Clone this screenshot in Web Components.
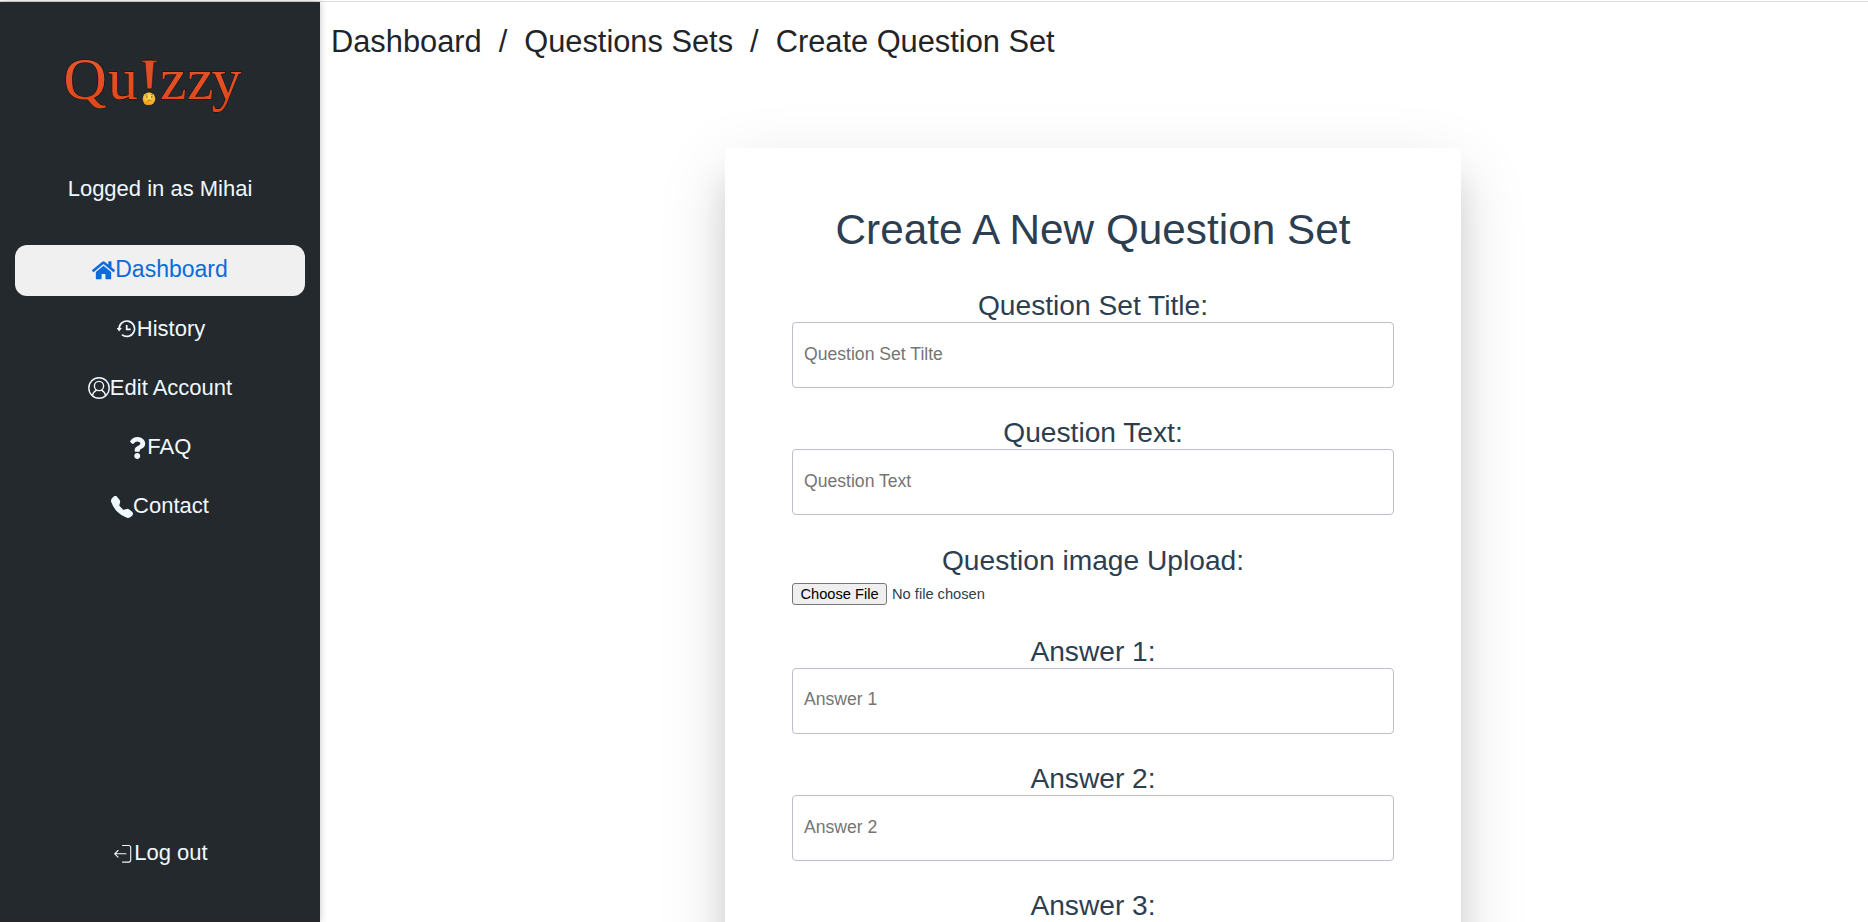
<!DOCTYPE html>
<html lang="en">
<head>
<meta charset="utf-8">
<title>Quizzy - Create Question Set</title>
<style>
html,body{margin:0;height:100%;overflow:hidden;background:#fff}
body{font-family:"Liberation Sans",Arial,sans-serif}
</style>
</head>
<body>
<quiz-app></quiz-app>
<script>
const define = (name, html, setup) => customElements.define(name, class extends HTMLElement {
  connectedCallback() {
    if (this.shadowRoot) return;
    const root = this.attachShadow({mode: 'open'});
    root.innerHTML = html;
    if (setup) setup(this, root);
  }
});

const icons = {
  home: ['0 0 576 512', 23, 20.5, '<path fill="currentColor" d="M280.37 148.26L96 300.11V464a16 16 0 0 0 16 16l112.06-.29a16 16 0 0 0 15.92-16V368a16 16 0 0 1 16-16h64a16 16 0 0 1 16 16v95.64a16 16 0 0 0 16 16.05L464 480a16 16 0 0 0 16-16V300L295.67 148.26a12.19 12.19 0 0 0-15.3 0zM571.6 251.47L488 182.56V44.05a12 12 0 0 0-12-12h-56a12 12 0 0 0-12 12v72.61L318.47 43a48 48 0 0 0-61 0L4.34 251.47a12 12 0 0 0-1.6 16.9l25.5 31A12 12 0 0 0 45.15 301l235.22-193.74a12.19 12.19 0 0 1 15.3 0L530.9 301a12 12 0 0 0 16.9-1.6l25.5-31a12 12 0 0 0-1.7-16.93z"/>'],
  history: ['0 0 22 22', 22, 22, '<g fill="none" stroke="currentColor" stroke-width="1.7"><path d="M4.2 11.6A7.7 7.7 0 1 1 6.9 16.6"/><path d="M11.7 7v4.4h4"/></g><path fill="currentColor" d="M1.6 9.9h5.2L4.2 13.6z"/>'],
  user: ['0 0 22 22', 22, 22, '<g fill="none" stroke="currentColor" stroke-width="1.4"><circle cx="11" cy="11" r="10.2"/><circle cx="11" cy="9" r="4.6"/><path d="M4.4 18.7c.6-3 2.2-4.6 4.2-5.6M17.6 18.7c-.6-3-2.2-4.6-4.2-5.6"/></g>'],
  question: ['0 0 435 512', 18.7, 22, '<path fill="currentColor" d="M202.021 0C122.202 0 70.503 32.703 29.914 91.026c-7.363 10.58-5.093 25.086 5.178 32.874l43.138 32.709c10.373 7.865 25.132 6.026 33.253-4.148 25.049-31.381 43.63-49.449 82.757-49.449 30.764 0 68.816 19.799 68.816 49.631 0 22.552-18.617 34.134-48.993 51.164-35.423 19.86-82.299 44.576-82.299 106.405V320c0 13.255 10.745 24 24 24h72.471c13.255 0 24-10.745 24-24v-5.773c0-42.86 125.268-44.645 125.268-160.627C377.504 66.256 286.902 0 202.021 0zM192 373.459c-38.196 0-69.271 31.075-69.271 69.271 0 38.195 31.075 69.27 69.271 69.27s69.271-31.075 69.271-69.271-31.075-69.27-69.271-69.27z"/>'],
  phone: ['0 0 16 16', 22, 22, '<path fill="currentColor" d="M1.885.511a1.745 1.745 0 0 1 2.61.163L6.29 2.98c.329.423.445.974.315 1.494l-.547 2.19a.68.68 0 0 0 .178.643l2.457 2.457a.68.68 0 0 0 .644.178l2.189-.547a1.75 1.75 0 0 1 1.494.315l2.306 1.794c.829.645.905 1.87.163 2.611l-1.034 1.034c-.74.74-1.846 1.065-2.877.702a18.6 18.6 0 0 1-7.01-4.42 18.6 18.6 0 0 1-4.42-7.009c-.362-1.03-.037-2.137.703-2.877z"/>'],
  logout: ['0 0 22 22', 22, 22, '<g fill="none" stroke="currentColor" stroke-width="1.1" stroke-linecap="round" stroke-linejoin="round"><path d="M10.5 2.5h6.2a2 2 0 0 1 2 2v12.6a2 2 0 0 1-2 2h-6.2"/><path d="M2.8 10.8h11.2M6 7.5l-3.3 3.3L6 14.1"/></g>']
};

define('quiz-icon', `<style>:host{display:block;flex:none;line-height:0}svg{display:block}</style>`, (el, root) => {
  const [box, w, h, body] = icons[el.getAttribute('name')];
  root.innerHTML += `<svg viewBox="${box}" width="${w}" height="${h}">${body}</svg>`;
});

define('quiz-logo', `<style>:host{display:block;width:210px;height:90px}svg{display:block;overflow:visible}
text{font-family:"Liberation Serif",serif;font-size:60px;fill:url(#o);stroke:#160d0b;stroke-width:1;paint-order:stroke}</style>
<svg width="210" height="90" viewBox="48 37 210 90">
<defs><linearGradient id="o" x1="0" y1="0" x2="0" y2="1"><stop offset="0" stop-color="#e95a30"/><stop offset="1" stop-color="#de4519"/></linearGradient>
<radialGradient id="e" cx=".5" cy=".3" r=".75"><stop offset="0" stop-color="#ffe65a"/><stop offset="1" stop-color="#f39a17"/></radialGradient></defs>
<text x="63.5 108 139.2 160 187 211.5" y="98.8">Qu!zzy</text>
<path d="M141.8 60.6h15.4v1.2l-3.4 1-2 26h-4.6l-2-26-3.4-1z" fill="#df4e25" stroke="#160d0b" stroke-width=".5"/>
<circle cx="149" cy="98.7" r="6.3" fill="url(#e)"/>
<path d="M145.3 95.4q1.3-1 2.5-.5M150.4 94.5q1.7-.5 2.7.6M147.5 100.6q2-.9 4 .2" fill="none" stroke="#8a5a22" stroke-width=".7"/>
<circle cx="147" cy="97" r=".7" fill="#59351a"/><circle cx="151.8" cy="97" r=".7" fill="#59351a"/>
<path d="M143.5 101.5q3 .6 5.5-.4l.4 1.3-2 2.3q-3.3.4-3.9-3.2z" fill="#eba318"/>
</svg>`);

define('nav-item', `<style>
:host{display:flex;align-items:center;justify-content:center;height:51px;box-sizing:border-box;border-radius:12px;font-size:22px;line-height:25px;color:#f0f8ff;white-space:nowrap}
:host([active]){background:#f0f0f0;color:#0a6cdc;font-size:23px}
span{position:relative;top:-1px}
</style><span><slot></slot></span>`, (el, root) => {
  const icon = document.createElement('quiz-icon');
  icon.setAttribute('name', el.getAttribute('icon'));
  root.querySelector('span').before(icon);
});

define('quiz-sidebar', `<style>
:host{display:flex;flex-direction:column;width:320px;box-sizing:border-box;padding:35px 15px 42px;background:#24292d;box-shadow:0 0 7px rgba(0,0,0,.25);border-bottom:1px solid #2a2028}
quiz-logo{margin-left:33px;flex:none}
p{margin:49px 0 0;text-align:center;font-size:22px;line-height:26px;color:#f0f8ff}
nav{display:flex;flex-direction:column;gap:8.2px;margin-top:42.6px}
.out{margin-top:auto}
</style>
<quiz-logo></quiz-logo><p>Logged in as Mihai</p>
<nav><nav-item icon="home" active>Dashboard</nav-item><nav-item icon="history">History</nav-item><nav-item icon="user">Edit Account</nav-item><nav-item icon="question">FAQ</nav-item><nav-item icon="phone">Contact</nav-item></nav>
<nav-item class="out" icon="logout">Log out</nav-item>`);

define('bread-crumb', `<style>:host{display:flex;gap:17px;font-size:30.8px;line-height:36px;color:#212529;white-space:nowrap}</style>
<span>Dashboard</span><span>/</span><span>Questions Sets</span><span>/</span><span>Create Question Set</span>`);

define('form-field', `<style>
:host{display:block;margin-bottom:29.4px}
label{display:block;height:32px;line-height:32px;font-size:28.16px;text-align:center}
input{display:block;width:100%;height:66px;box-sizing:border-box;border:1px solid #bdbdcb;border-radius:4px;padding:0 11px 1.4px;font:17.6px "Liberation Sans",Arial,sans-serif;background:#fff}
input::placeholder{color:#757575}
</style><label></label><input>`, (el, root) => {
  root.querySelector('label').textContent = el.getAttribute('label');
  root.querySelector('input').placeholder = el.getAttribute('hint');
});

define('file-field', `<style>
:host{display:block;margin-bottom:29.4px}
label{display:block;height:32px;line-height:32px;font-size:28.16px;text-align:center}
div{display:flex;align-items:center;gap:5px;height:22px;padding:6px 0 1.5px;font-size:14.67px}
button{box-sizing:border-box;width:95px;height:22px;padding:0;border:1px solid #767676;border-radius:3px;background:#efefef;color:#000;font:14.67px/18px "Liberation Sans",Arial,sans-serif}
</style><label>Question image Upload:</label><div><button>Choose File</button><span>No file chosen</span></div>`);

define('question-form', `<style>
:host{display:block;width:736px;box-sizing:border-box;padding:58px 67px;border-radius:5px;background:#fff;color:#2c3e50;box-shadow:0 22px 70px rgba(0,0,0,.13),0 32px 32px rgba(0,0,0,.11)}
h1{margin:0 0 36px;font-size:42.3px;font-weight:400;line-height:48px;text-align:center;white-space:nowrap}
</style><h1>Create A New Question Set</h1>
<form-field label="Question Set Title:" hint="Question Set Tilte"></form-field>
<form-field label="Question Text:" hint="Question Text"></form-field>
<file-field></file-field>
<form-field label="Answer 1:" hint="Answer 1"></form-field>
<form-field label="Answer 2:" hint="Answer 2"></form-field>
<form-field label="Answer 3:" hint="Answer 3"></form-field>`);

define('quiz-app', `<style>
:host{display:flex;height:922px;box-sizing:border-box;padding-top:2px;overflow:hidden;background:linear-gradient(#fff 1px,#dadcdc 1px 2px,#fff 2px)}
quiz-sidebar{flex:none;height:920px;z-index:1}
main{flex:1;min-width:0;height:920px;overflow:hidden;display:flex;flex-direction:column;box-sizing:border-box;padding:22px 0 0 11px}
question-form{margin:88px 0 0 394px;flex:none}
</style><quiz-sidebar></quiz-sidebar><main><bread-crumb></bread-crumb><question-form></question-form></main>`);
</script>
</body>
</html>
